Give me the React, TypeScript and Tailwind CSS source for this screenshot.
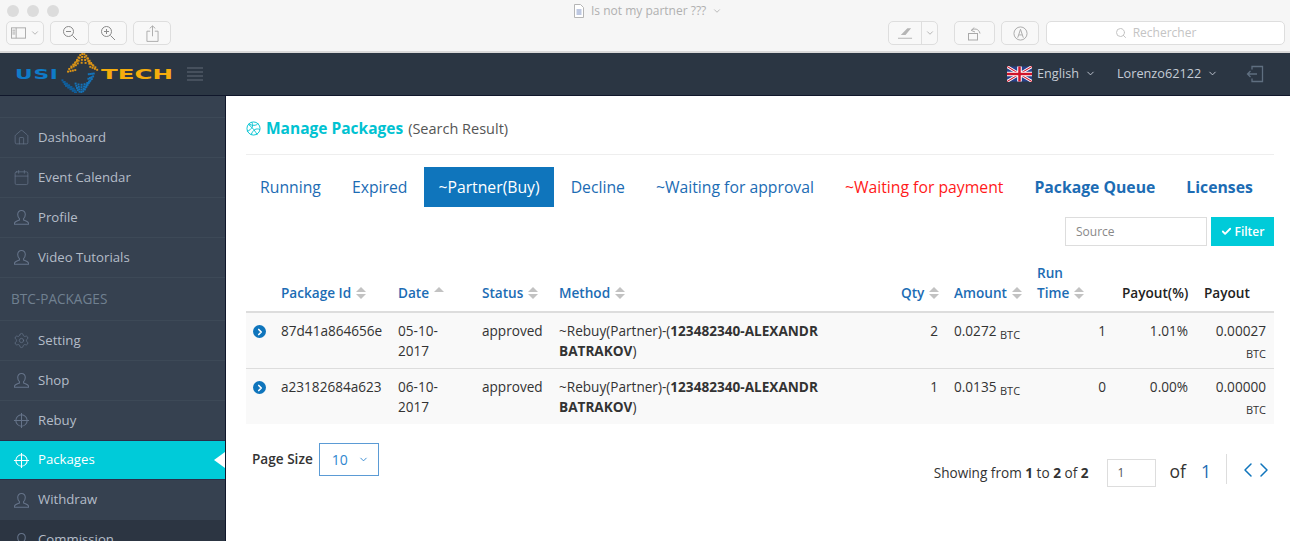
import type { ReactNode } from "react";
import { ChevronDown, ChevronLeft, ChevronRight, Search, Check, Home, Calendar, Settings } from "lucide-react";

const FONT = { fontFamily: '"Open Sans", sans-serif' };

function Target({ className = "" }: { className?: string }) {
  return (
    <svg viewBox="0 0 18 18" className={className} fill="none" stroke="currentColor" strokeWidth="1.1">
      <circle cx="9" cy="9" r="6" />
      <path d="M9 1v16M1 9h16" />
    </svg>
  );
}

function Person({ className = "" }: { className?: string }) {
  return (
    <svg viewBox="0 0 18 18" className={className} fill="none" stroke="currentColor" strokeWidth="1.1">
      <path d="M9 1.500c-2.600 0-4 1.900-4 4.300 0 1.900.8 3.400 1.800 4.400v1.500c-1.700.8-5.200 1.600-5.200 3.400v1h14.800v-1c0-1.800-3.500-2.600-5.200-3.400v-1.500c1-1 1.800-2.500 1.800-4.400 0-2.400-1.400-4.300-4-4.300z" />
    </svg>
  );
}

function LogoDots() {
  const dots: { x: number; y: number; c: string }[] = [];
  for (let s = 0; s < 4; s++) {
    // orange strands over the top of the ring
    for (let i = 0; i < 11; i++) {
      const a = ((190 + (i / 10) * 150) * Math.PI) / 180;
      dots.push({ x: 22 + (8 + s * 2.500) * Math.cos(a), y: 21 + (20 - s * 3) * Math.sin(a), c: "#dc9416" });
    }
    // blue strands round the bottom
    for (let i = 0; i < 9; i++) {
      const a = ((5 + (i / 8) * 110) * Math.PI) / 180;
      dots.push({ x: 20 + (8 + s * 1.700) * Math.cos(a), y: 20 + (20 - s * 2.500) * Math.sin(a), c: "#1573b8" });
    }
    // tail running off to the lower left
    for (let i = 0; i < 6; i++) {
      dots.push({ x: 1 + s * 1.200 + i * 2.300, y: 28 + s * 2.300 + i * 1.700 - s * 0.4, c: "#115f9c" });
    }
  }
  return (
    <svg viewBox="0 0 42 42" className="h-[41px] w-[42px] shrink-0">
      {dots.map((d, i) => (
        <rect key={i} x={d.x} y={d.y} width="2" height="2" fill={d.c} />
      ))}
    </svg>
  );
}

function UkFlag() {
  return (
    <svg viewBox="0 0 60 36" className="h-[16px] w-[25px]">
      <rect width="60" height="36" fill="#27408b" />
      <path d="M0 0l60 36M60 0L0 36" stroke="#fff" strokeWidth="7" />
      <path d="M0 0l60 36M60 0L0 36" stroke="#cf142b" strokeWidth="2.500" />
      <path d="M30 0v36M0 18h60" stroke="#fff" strokeWidth="11" />
      <path d="M30 0v36M0 18h60" stroke="#cf142b" strokeWidth="6" />
    </svg>
  );
}

function ToolButton({ className = "", children }: { className?: string; children: ReactNode }) {
  return (
    <div className={`flex h-[24px] items-center justify-center rounded-[5px] border border-[#dedede] bg-[#f8f8f8] text-[#a9a9a9] ${className}`}>
      {children}
    </div>
  );
}

function Toolbar() {
  return (
    <div className="h-[53px] shrink-0 border-b-2 border-[#d9d9d9] bg-[#f6f6f6]">
      <div className="flex h-[21px] items-center">
        <div className="flex gap-[8px] pl-[7px]">
          <span className="h-[12px] w-[12px] rounded-full bg-[#dcdcdc]" />
          <span className="h-[12px] w-[12px] rounded-full bg-[#dcdcdc]" />
          <span className="h-[12px] w-[12px] rounded-full bg-[#dcdcdc]" />
        </div>
        <div className="ml-[514px] flex items-center gap-[6px] text-[12px] text-[#b0b0b0]">
          <svg viewBox="0 0 12 14" className="h-[14px] w-[12px]" fill="#fff" stroke="#b5b5b5">
            <path d="M1.500.500h6l3 3v10h-9z" />
            <path d="M3.500 6h5M3.500 8h5M3.500 10h5" stroke="#7e92c4" />
          </svg>
          <span>Is not my partner ???</span>
          <ChevronDown size={10} />
        </div>
      </div>
      <div className="flex items-center pl-[6px]">
        <ToolButton className="w-[38px] gap-[4px]">
          <svg viewBox="0 0 16 12" className="h-[12px] w-[15px]" fill="none" stroke="currentColor">
            <rect x=".500" y=".500" width="15" height="11" />
            <path d="M5.500 .500v11M1.500 3h3M1.500 5h3M1.500 7h3" />
          </svg>
          <ChevronDown size={10} strokeWidth={2} />
        </ToolButton>
        <ToolButton className="ml-[6px] w-[39px]">
          <svg viewBox="0 0 16 16" className="h-[16px] w-[16px]" fill="none" stroke="#8a8a8a">
            <circle cx="6.500" cy="6.500" r="5" />
            <path d="M4 6.500h5M10.500 10.500l4.500 4.500" />
          </svg>
        </ToolButton>
        <ToolButton className="ml-[-1px] w-[39px]">
          <svg viewBox="0 0 16 16" className="h-[16px] w-[16px]" fill="none" stroke="#8a8a8a">
            <circle cx="6.500" cy="6.500" r="5" />
            <path d="M4 6.500h5M6.500 4v5M10.500 10.500l4.500 4.500" />
          </svg>
        </ToolButton>
        <ToolButton className="ml-[6px] w-[38px]">
          <svg viewBox="0 0 14 18" className="h-[17px] w-[13px]" fill="none" stroke="currentColor">
            <path d="M4.500 6.500h-3.500v11h12v-11h-3.500M7 12V1M4 3.500L7 .800l3 2.700" />
          </svg>
        </ToolButton>
        <ToolButton className="ml-[717px] w-[50px]">
          <div className="flex w-[32px] justify-center">
            <svg viewBox="0 0 16 12" className="h-[12px] w-[15px]" fill="#b5b5b5">
              <path d="M3 8l7-7 4 0-6 7zM0 11h15v1H0z" />
            </svg>
          </div>
          <div className="flex h-full flex-1 items-center justify-center border-l border-[#dedede]">
            <ChevronDown size={10} strokeWidth={2} />
          </div>
        </ToolButton>
        <ToolButton className="ml-[16px] w-[41px]">
          <svg viewBox="0 0 16 16" className="h-[16px] w-[16px]" fill="none" stroke="currentColor">
            <rect x="1.500" y="8.500" width="9" height="6.500" />
            <path d="M4 5.500c3-2.500 8-2 9 3M7 2.500L4.500 5.500l3.500 1.500" />
          </svg>
        </ToolButton>
        <ToolButton className="ml-[6px] w-[38px]">
          <svg viewBox="0 0 16 16" className="h-[15px] w-[15px]" fill="none" stroke="currentColor">
            <circle cx="8" cy="8" r="7" />
            <path d="M5 12.500L8 3.500l3 9M6.500 9.500h3" />
          </svg>
        </ToolButton>
        <ToolButton className="ml-[7px] w-[239px] gap-[6px] bg-white pr-[20px] text-[12px] text-[#c4c4c4]">
          <Search size={12} />
          <span>Rechercher</span>
        </ToolButton>
      </div>
    </div>
  );
}

function Header() {
  return (
    <div className="flex h-[43px] shrink-0 items-center border-b border-[#10172b] bg-[#2b3643] text-[12.7px] text-[#c5ccd6]">
      <div className="flex w-[187px] items-center pl-[15px]">
        <span className="w-[44px] origin-left scale-x-[1.55] text-[14px] font-bold leading-none tracking-[0.5px] text-[#0f7bc7]" style={{ fontFamily: '"DejaVu Sans", sans-serif' }}>
          USI
        </span>
        <div className="-mt-[3px] ml-[1px]">
          <LogoDots />
        </div>
        <span className="ml-[-1px] origin-left scale-x-[1.75] text-[14px] font-bold leading-none text-[#f4ac0d]" style={{ fontFamily: '"DejaVu Sans", sans-serif' }}>
          TECH
        </span>
      </div>
      <div className="flex w-[16px] flex-col gap-[2px]">
        <span className="h-[2px] bg-[#46505d]" />
        <span className="h-[2px] bg-[#46505d]" />
        <span className="h-[2px] bg-[#46505d]" />
        <span className="h-[2px] bg-[#46505d]" />
      </div>
      <div className="ml-[804px] flex items-center gap-[5px]">
        <UkFlag />
        <span>English</span>
        <ChevronDown size={11} className="ml-[1px]" />
      </div>
      <div className="ml-[21px] flex items-center gap-[6px]">
        <span>Lorenzo62122</span>
        <ChevronDown size={11} />
      </div>
      <svg viewBox="0 0 18 18" className="ml-[28px] h-[18px] w-[18px]" fill="none" stroke="#5f6f80" strokeWidth="1.300">
        <path d="M6 4.500V1.500h10.500v15H6v-3M11 9H1.500M4.500 6L1.500 9l3 3" />
      </svg>
    </div>
  );
}

const NAV_TOP = [
  { label: "Dashboard", icon: <Home size={17} strokeWidth={1} /> },
  { label: "Event Calendar", icon: <Calendar size={17} strokeWidth={1} /> },
  { label: "Profile", icon: <Person className="h-[17px] w-[17px]" /> },
  { label: "Video Tutorials", icon: <Person className="h-[17px] w-[17px]" /> },
];

const NAV_BOTTOM = [
  { label: "Setting", icon: <Settings size={17} strokeWidth={1} /> },
  { label: "Shop", icon: <Person className="h-[17px] w-[17px]" /> },
  { label: "Rebuy", icon: <Target className="h-[17px] w-[17px]" /> },
];

function NavRow({ label, icon }: { label: string; icon: ReactNode }) {
  return (
    <div className="flex h-[40px] items-center gap-[8px] border-t border-[#3d4957] pl-[13px] text-[13.2px] text-[#b4bcc8]">
      <span className="text-[#66748a]">{icon}</span>
      <span>{label}</span>
    </div>
  );
}

function Sidebar() {
  return (
    <div className="w-[226px] shrink-0 border-r border-[#10172b] bg-[#364150] pt-[21px]">
      {NAV_TOP.map((n) => (
        <NavRow key={n.label} {...n} />
      ))}
      <div className="flex h-[43px] items-end border-t border-[#3d4957] pb-[11px] pl-[11px] text-[13.6px] text-[#708090]">BTC-PACKAGES</div>
      {NAV_BOTTOM.map((n) => (
        <NavRow key={n.label} {...n} />
      ))}
      <div className="relative flex h-[40px] items-center gap-[8px] border-y border-[#2a2f4a] bg-[#00cbd9] pl-[13px] text-[13.2px] text-white">
        <Target className="h-[17px] w-[17px]" />
        <span>Packages</span>
        <span className="absolute right-0 top-[11px] h-0 w-0 border-y-[8px] border-r-[11px] border-y-transparent border-r-white" />
      </div>
      <div className="flex h-[40px] items-center gap-[8px] pl-[13px] text-[13.2px] text-[#b4bcc8]">
        <span className="text-[#66748a]">
          <Person className="h-[17px] w-[17px]" />
        </span>
        <span>Withdraw</span>
      </div>
      <div className="flex h-[40px] items-center gap-[8px] bg-[#2c3542] pl-[13px] text-[13.2px] text-[#b4bcc8]">
        <span className="text-[#66748a]">
          <Person className="h-[17px] w-[17px]" />
        </span>
        <span>Commission</span>
      </div>
    </div>
  );
}

function SortIcon({ only }: { only?: boolean }) {
  return (
    <span className="ml-[5px] inline-block align-[-1px]">
      <span className="block h-0 w-0 border-x-[5px] border-b-[5px] border-x-transparent border-b-[#c2c2c2]" />
      <span className={`mt-[2px] block h-0 w-0 border-x-[5px] border-t-[5px] border-x-transparent ${only ? "border-t-transparent" : "border-t-[#c2c2c2]"}`} />
    </span>
  );
}

const TABS = [
  { label: "Running", cls: "text-[#1c6cb4]" },
  { label: "Expired", cls: "text-[#1c6cb4]" },
  { label: "~Partner(Buy)", cls: "bg-[#0f75bc] text-white" },
  { label: "Decline", cls: "text-[#1c6cb4]" },
  { label: "~Waiting for approval", cls: "text-[#1c6cb4]" },
  { label: "~Waiting for payment", cls: "text-[#ff1a1a]" },
  { label: "Package Queue", cls: "font-bold text-[#1c6cb4]" },
  { label: "Licenses", cls: "font-bold text-[#1c6cb4]" },
];

const ROWS = [
  { id: "87d41a864656e", date: ["05-10-", "2017"], qty: 2, amount: "0.0272", run: 1, pct: "1.01%", payout: "0.00027" },
  { id: "a23182684a623", date: ["06-10-", "2017"], qty: 1, amount: "0.0135", run: 0, pct: "0.00%", payout: "0.00000" },
];

function PackagesTable() {
  return (
    <table className="w-[1028px] table-fixed border-collapse text-[13.6px] leading-[20px] text-[#333]">
      <colgroup>
        <col className="w-[28px]" />
        <col className="w-[117px]" />
        <col className="w-[84px]" />
        <col className="w-[77px]" />
        <col className="w-[342px]" />
        <col className="w-[53px]" />
        <col className="w-[83px]" />
        <col className="w-[84px]" />
        <col className="w-[82px]" />
        <col className="w-[78px]" />
      </colgroup>
      <thead>
        <tr className="border-b-2 border-[#dddddd] text-left align-bottom font-semibold text-[#1c6cb4]">
          <th className="px-[7px] pb-[8px] pt-[8px]" />
          <th className="whitespace-nowrap px-[7px] pb-[8px] pt-[8px] font-semibold">
            Package Id
            <SortIcon />
          </th>
          <th className="whitespace-nowrap px-[7px] pb-[8px] pt-[8px] font-semibold">
            Date
            <SortIcon only />
          </th>
          <th className="whitespace-nowrap px-[7px] pb-[8px] pt-[8px] font-semibold">
            Status
            <SortIcon />
          </th>
          <th className="whitespace-nowrap px-[7px] pb-[8px] pt-[8px] font-semibold">
            Method
            <SortIcon />
          </th>
          <th className="whitespace-nowrap px-[7px] pb-[8px] pt-[8px] font-semibold">
            Qty
            <SortIcon />
          </th>
          <th className="whitespace-nowrap px-[7px] pb-[8px] pt-[8px] font-semibold">
            Amount
            <SortIcon />
          </th>
          <th className="whitespace-nowrap px-[7px] pb-[8px] pt-[8px] font-semibold">
            Run
            <br />
            Time
            <SortIcon />
          </th>
          <th className="whitespace-nowrap px-[8px] pb-[8px] pt-[8px] text-right font-semibold text-[#222]">Payout(%)</th>
          <th className="px-[8px] pb-[8px] pt-[8px] text-left font-semibold text-[#222]">Payout</th>
        </tr>
      </thead>
      <tbody className="leading-[19.5px]">
        {ROWS.map((r) => (
          <tr key={r.id} className="border-b border-[#dddddd] bg-[#f9f9f9] align-top last:border-b-0">
            <td className="px-[7px] py-[8px]">
              <span className="mt-[4px] flex h-[13px] w-[13px] items-center justify-center rounded-full bg-[#0f75bc] text-white">
                <ChevronRight size={10} strokeWidth={4} />
              </span>
            </td>
            <td className="px-[7px] py-[8px]">{r.id}</td>
            <td className="px-[7px] py-[8px]">
              {r.date[0]}
              <br />
              {r.date[1]}
            </td>
            <td className="px-[7px] py-[8px]">approved</td>
            <td className="px-[7px] py-[8px]">
              ~Rebuy(Partner)-(<b>123482340-ALEXANDR BATRAKOV</b>)
            </td>
            <td className="px-[9px] py-[8px] text-right">{r.qty}</td>
            <td className="whitespace-nowrap px-[7px] py-[8px]">
              {r.amount} <small className="align-[-3px] text-[11px] leading-none">BTC</small>
            </td>
            <td className="px-[8px] py-[8px] text-right">{r.run}</td>
            <td className="px-[8px] py-[8px] text-right">{r.pct}</td>
            <td className="px-[8px] pb-[5px] pt-[8px] text-right">
              {r.payout}
              <span className="block pt-[3px] text-[11px]">BTC</span>
            </td>
          </tr>
        ))}
      </tbody>
    </table>
  );
}

function Content() {
  return (
    <div className="min-w-0 flex-1 bg-white pl-[20px] pr-[16px]">
      <div className="flex h-[59px] items-center gap-[5px] border-b border-[#eeeeee] pt-[7px]">
        <svg viewBox="0 0 16 16" className="h-[15px] w-[15px]" fill="none" stroke="#00c2d1" strokeWidth="1">
          <circle cx="8" cy="8" r="7" />
          <path d="M2.500 3.500c4 3 8 8 9.500 11.500M6 1.300c2.500 3 .5 8-5 9.700M14.800 9c-4-1.500-7 0-9.300 5.500M3 3c3 2 8 2.500 10-.5" />
        </svg>
        <span className="text-[15.5px] font-bold text-[#00c2d1]">Manage Packages</span>
        <span className="text-[14.5px] text-[#555]">(Search Result)</span>
      </div>
      <div className="mt-[12px] flex gap-[3px] text-[15.75px]">
        {TABS.map((t) => (
          <div key={t.label} className={`flex h-[40px] items-center whitespace-nowrap px-[14px] pt-px ${t.cls}`}>
            {t.label}
          </div>
        ))}
      </div>
      <div className="mb-[9px] mt-[10px] flex justify-end gap-[4px]">
        <div className="flex h-[29px] w-[142px] items-center border border-[#dddddd] pl-[10px] text-[12px] text-[#888]">Source</div>
        <div className="flex h-[29px] w-[63px] items-center justify-center gap-[3px] bg-[#00cbd9] text-[12px] font-semibold text-white">
          <Check size={11} strokeWidth={4} />
          Filter
        </div>
      </div>
      <PackagesTable />
      <div className="flex items-start justify-between">
        <div className="mt-[19px] flex items-center gap-[6px] pl-[6px] text-[13.6px] font-semibold text-[#333]">
          <span>Page Size</span>
          <div className="flex h-[33px] w-[60px] items-center gap-[10px] border border-[#5b9bd5] pl-[12px] text-[14px] font-normal text-[#2f86cf]">
            10
            <ChevronDown size={11} />
          </div>
        </div>
        <div className="mr-[-2px] mt-[27px] flex items-center">
          <span className="mt-[8px] text-[13.6px] text-[#333]">
            Showing from <b>1</b> to <b>2</b> of <b>2</b>
          </span>
          <div className="ml-[18px] mt-[8px] flex h-[28px] w-[49px] items-center border border-[#dddddd] pl-[10px] text-[12px] text-[#555]">1</div>
          <span className="ml-[14px] mt-[5px] text-[17.5px] text-[#333]">of</span>
          <span className="ml-[15px] mt-[5px] text-[17.5px] text-[#1c6cb4]">1</span>
          <span className="ml-[15px] h-[30px] w-px bg-[#dddddd]" />
          <span className="ml-[12px] mt-[2px] flex text-[#0f75bc]">
            <ChevronLeft size={24} strokeWidth={1.500} className="-ml-[3px]" />
            <ChevronRight size={24} strokeWidth={1.500} className="-ml-[8px]" />
          </span>
        </div>
      </div>
    </div>
  );
}

export default function App() {
  return (
    <div className="flex h-[541px] w-[1290px] flex-col overflow-hidden bg-white" style={FONT}>
      <Toolbar />
      <Header />
      <div className="flex min-h-0 flex-1">
        <Sidebar />
        <Content />
      </div>
    </div>
  );
}
